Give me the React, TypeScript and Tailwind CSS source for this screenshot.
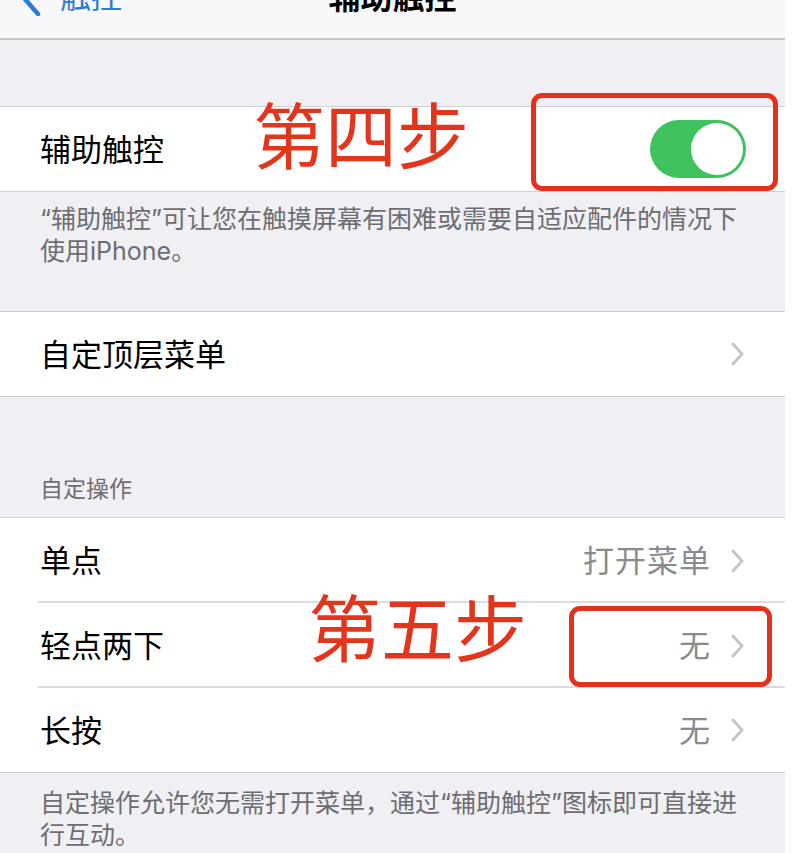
import React from "react";

const Chevron = () => (
  <svg width="14" height="24" viewBox="0 0 14 24" className="shrink-0">
    <polyline points="2,2 11,12 2,22" fill="none" stroke="#c4c4c9" strokeWidth="3" strokeLinecap="round" strokeLinejoin="round" />
  </svg>
);

const Row = ({ label, value, chevron = true, last = false, tall = false }: { label: string; value?: string; chevron?: boolean; last?: boolean; tall?: boolean }) => (
  <div className={`relative ${tall ? "h-[85px]" : "h-[84px]"} bg-white flex items-center pl-[40px] pr-[40px]`}>
    <span className="text-[31px] text-black leading-none">{label}</span>
    <div className="ml-auto flex items-center gap-[20px]">
      {value && <span className="text-[31px] text-[#8a8a8f] leading-none tracking-[1px]">{value}</span>}
      {chevron && <Chevron />}
    </div>
    {!last && <div className="absolute left-[38px] right-0 bottom-0 h-[2px] bg-[#dcdce0]" />}
  </div>
);

export default function App() {
  return (
    <div className="relative w-[800px] h-[853px] overflow-hidden bg-white font-['Inter','Noto_Sans_CJK_SC',sans-serif]">
      <div className="w-[785px] h-full bg-[#efeff4] flex flex-col">
        {/* nav bar */}
        <div className="h-[40px] shrink-0 bg-[#f8f8fa] border-b-2 border-[#c8c8cc] relative overflow-hidden">
          <svg width="30" height="24" viewBox="0 0 30 24" className="absolute left-[14px] top-[-8px]">
            <polyline points="22,-4 10,6 24,22" fill="none" stroke="#2a7ad8" strokeWidth="4.5" strokeLinecap="round" strokeLinejoin="round" />
          </svg>
          <div className="absolute left-[60px] top-[-19px] text-[31px] leading-none text-[#2a7ad8]">触控</div>
          <div className="absolute left-0 right-0 top-[-18px] text-center text-[32px] leading-none font-semibold text-black">辅助触控</div>
        </div>

        <div className="h-[66px] shrink-0" />

        {/* group 1 */}
        <div className="border-y border-[#cfcfd3]">
          <Row label="辅助触控" chevron={false} last />
        </div>
        <div className="h-[119px] shrink-0 pt-[11px] pl-[40px] pr-[30px] text-[25px] leading-[32px] text-[#6d6d72]">
          “辅助触控”可让您在触摸屏幕有困难或需要自适应配件的情况下使用iPhone。
        </div>

        {/* group 2 */}
        <div className="border-y border-[#cfcfd3]">
          <Row label="自定顶层菜单" last />
        </div>
        <div className="h-[120px] shrink-0 flex items-end pl-[40px] pb-[14px] text-[23px] leading-[28px] text-[#6d6d72]">
          自定操作
        </div>

        {/* group 3 */}
        <div className="border-y border-[#cfcfd3]">
          <Row label="单点" value="打开菜单" tall />
          <Row label="轻点两下" value="无" tall />
          <Row label="长按" value="无" last />
        </div>
        <div className="pt-[14px] pl-[40px] pr-[30px] text-[25px] leading-[32px] text-[#6d6d72]">
          自定操作允许您无需打开菜单，通过“辅助触控”图标即可直接进行互动。
        </div>
      </div>

      {/* toggle */}
      <div className="absolute left-[650px] top-[120px] w-[96px] h-[58px] rounded-full bg-[#3fc15e] p-[3px] flex justify-end">
        <div className="w-[52px] h-[52px] rounded-full bg-white" />
      </div>

      {/* annotations */}
      <div className="absolute left-[531px] top-[93px] w-[247px] h-[98px] border-[5px] border-[#e3311b] rounded-[11px]" />
      <div className="absolute left-[253px] top-[96px] text-[72px] leading-none text-[#e2351c] font-['Noto_Sans_CJK_SC',sans-serif]">第四步</div>
      <div className="absolute left-[569px] top-[606px] w-[203px] h-[81px] border-[5px] border-[#e3311b] rounded-[11px]" />
      <div className="absolute left-[308px] top-[588px] text-[73px] leading-none text-[#e2351c] font-['Noto_Sans_CJK_SC',sans-serif]">第五步</div>
    </div>
  );
}
